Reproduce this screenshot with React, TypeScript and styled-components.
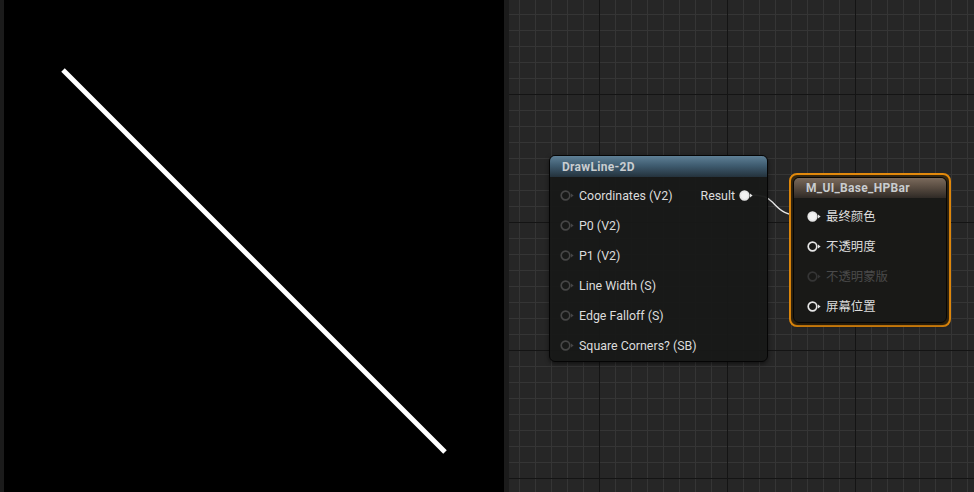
import React from "react";
import styled, { createGlobalStyle } from "styled-components";

const GlobalStyle = createGlobalStyle`
  html, body {
    margin: 0;
    padding: 0;
    background: #000;
    overflow: hidden;
  }
  body {
    font-family: Roboto, "Noto Sans CJK SC", sans-serif;
  }
`;

const Screen = styled.div`
  display: flex;
  width: 974px;
  height: 492px;
`;

const EdgeStrip = styled.div<{ width: number }>`
  flex: 0 0 ${(p) => p.width}px;
  background: #1b1b1b;
`;

const Viewport = styled.div`
  flex: 0 0 500px;
  background: #000;
  position: relative;
`;

const PreviewCanvas = styled.svg`
  display: block;
  width: 100%;
  height: 100%;
`;

// graph lines: minor 16px, major every 128px
const Graph = styled.div`
  flex: 1;
  position: relative;
  overflow: hidden;
  background-color: #262626;
  background-image: linear-gradient(to right, #141414 1px, transparent 1px),
    linear-gradient(to bottom, #141414 1px, transparent 1px),
    linear-gradient(to right, #353535 1px, transparent 1px),
    linear-gradient(to bottom, #353535 1px, transparent 1px);
  background-size: 128px 128px, 128px 128px, 16px 16px, 16px 16px;
  background-position: 90px 0, 0 94px, 10px 0, 0 14px;
`;

const Wires = styled.svg`
  position: absolute;
  left: 0;
  top: 0;
  width: 100%;
  height: 100%;
  pointer-events: none;
`;

const Node = styled.div<{ x: number; y: number; w: number }>`
  position: absolute;
  left: ${(p) => p.x}px;
  top: ${(p) => p.y}px;
  width: ${(p) => p.w}px;
  display: flex;
  flex-direction: column;
  background: rgba(24, 25, 24, 0.96);
  border: 1px solid #050505;
  border-radius: 6px;
  box-shadow: 0 2px 4px rgba(0, 0, 0, 0.5);
  overflow: hidden;
`;

const Selection = styled.div<{ x: number; y: number }>`
  position: absolute;
  left: ${(p) => p.x}px;
  top: ${(p) => p.y}px;
  padding: 2px;
  border: 2px solid #e38a0c;
  border-radius: 8px;
  background: #3a2a10;

  & > div {
    position: static;
  }
`;

const Header = styled.div<{ tint: "blue" | "brown"; h: number }>`
  height: ${(p) => p.h}px;
  display: flex;
  align-items: center;
  padding: 0 12px;
  font-size: 12px;
  font-weight: 700;
  letter-spacing: 0.3px;
  color: #c9cdd0;
  background: ${(p) =>
    p.tint === "blue"
      ? "linear-gradient(to bottom, #5f8096 0%, #3f5c70 45%, #24323c 100%)"
      : "linear-gradient(to bottom, #7a6a5c 0%, #5a4d42 45%, #2f2a26 100%)"};
`;

const Body = styled.div`
  display: flex;
  flex-direction: column;
  padding: 3px 0 1px;
`;

const Row = styled.div<{ inset: number }>`
  height: 30px;
  display: flex;
  align-items: center;
  justify-content: space-between;
  padding: 0 13px 0 ${(p) => p.inset}px;
`;

const Pin = styled.div<{ dim?: boolean }>`
  display: flex;
  align-items: center;
  gap: 4px;
  font-size: 12.4px;
  color: ${(p) => (p.dim ? "#4a4a4a" : "#dcdcdc")};
  white-space: nowrap;
`;

type PinState = "empty" | "linked" | "open" | "dim";

const PinIcon = ({ state }: { state: PinState }) => {
  const stroke =
    state === "empty" ? "#464646" : state === "dim" ? "#353535" : "#e6e6e6";
  const fill = state === "linked" ? "#f2f2f2" : "none";
  return (
    <svg width="15" height="11" viewBox="0 0 15 11">
      <circle cx="5.5" cy="5.5" r="4.3" fill={fill} stroke={stroke} strokeWidth="1.7" />
      <polygon points="11,3.4 13.6,5.5 11,7.6" fill={stroke} />
    </svg>
  );
};

const inputs = [
  "Coordinates (V2)",
  "P0 (V2)",
  "P1 (V2)",
  "Line Width (S)",
  "Edge Falloff (S)",
  "Square Corners? (SB)",
];

const outputs: { label: string; state: PinState }[] = [
  { label: "最终颜色", state: "linked" },
  { label: "不透明度", state: "open" },
  { label: "不透明蒙版", state: "dim" },
  { label: "屏幕位置", state: "open" },
];

const App = () => (
  <>
    <GlobalStyle />
    <Screen>
      <EdgeStrip width={4} />
      <Viewport>
        <PreviewCanvas viewBox="0 0 500 492">
          <line x1="59" y1="70" x2="441" y2="452" stroke="#fff" strokeWidth="5" />
        </PreviewCanvas>
      </Viewport>
      <EdgeStrip width={5} />
      <Graph>
        <Wires>
          <path
            d="M 244 195 C 270 195, 262 216, 294 216"
            fill="none"
            stroke="#e6e6e6"
            strokeWidth="1.4"
          />
        </Wires>
        <Node x={40} y={155} w={217}>
          <Header tint="blue" h={21}>DrawLine-2D</Header>
          <Body>
            {inputs.map((label, i) => (
              <Row key={label} inset={10}>
                <Pin>
                  <PinIcon state="empty" />
                  {label}
                </Pin>
                {i === 0 && (
                  <Pin>
                    Result
                    <PinIcon state="linked" />
                  </Pin>
                )}
              </Row>
            ))}
          </Body>
        </Node>
        <Selection x={280} y={173}>
          <Node x={0} y={0} w={152}>
            <Header tint="brown" h={20}>M_UI_Base_HPBar</Header>
            <Body>
              {outputs.map((o) => (
                <Row key={o.label} inset={13}>
                  <Pin dim={o.state === "dim"}>
                    <PinIcon state={o.state} />
                    {o.label}
                  </Pin>
                </Row>
              ))}
            </Body>
          </Node>
        </Selection>
      </Graph>
    </Screen>
  </>
);

export default App;
